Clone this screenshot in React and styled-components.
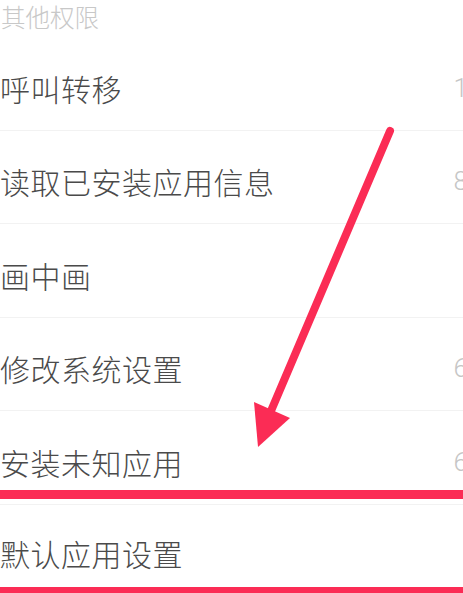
import React from "react";
import styled, { createGlobalStyle } from "styled-components";

const GlobalStyle = createGlobalStyle`
  html, body {
    margin: 0;
    padding: 0;
    background: #ffffff;
  }
  body {
    font-family: "Noto Sans CJK SC", "Noto Sans", sans-serif;
    overflow: hidden;
  }
`;

const Page = styled.div`
  position: relative;
  width: 463px;
  height: 593px;
  overflow: hidden;
  background: #ffffff;
`;

const SectionTitle = styled.div`
  height: 37px;
  padding-left: 1px;
  font-size: 24.5px;
  line-height: 34px;
  color: #c8c8c8;
  font-weight: 300;
`;

const List = styled.div`
  display: flex;
  flex-direction: column;
`;

const Row = styled.div`
  display: flex;
  align-items: center;
  justify-content: space-between;
  height: 93.5px;
  box-sizing: border-box;
  padding-top: ${(props) => (props.last ? "4px" : "9px")};
  border-bottom: 1px solid ${(props) => (props.last ? "transparent" : "#f2f2f2")};
`;

const Label = styled.span`
  font-size: 30px;
  letter-spacing: 0.5px;
  color: #4a4a4a;
  font-weight: 300;
  white-space: nowrap;
`;

const Count = styled.span`
  font-family: "Roboto", "Noto Sans", sans-serif;
  font-size: 26px;
  font-weight: 300;
  color: #c6c6c6;
  margin-right: -5px;
`;

/* 标注：红框 */
const Highlight = styled.div`
  position: absolute;
  left: 0;
  right: 0;
  top: 490px;
  height: 106px;
  box-sizing: border-box;
  border-top: 9px solid #fb2c55;
  border-bottom: 9px solid #fb2c55;
  pointer-events: none;
`;

const ArrowLayer = styled.svg`
  position: absolute;
  left: 0;
  top: 0;
  pointer-events: none;
`;

const items = [
  { name: "呼叫转移", count: "1" },
  { name: "读取已安装应用信息", count: "8" },
  { name: "画中画", count: "" },
  { name: "修改系统设置", count: "6" },
  { name: "安装未知应用", count: "6" },
  { name: "默认应用设置", count: "" },
];

function App() {
  return (
    <>
      <GlobalStyle />
      <Page>
        <SectionTitle>其他权限</SectionTitle>
        <List>
          {items.map((item, i) => (
            <Row key={item.name} last={i === items.length - 1}>
              <Label>{item.name}</Label>
              <Count>{item.count}</Count>
            </Row>
          ))}
        </List>

        <Highlight />

        <ArrowLayer width="463" height="593" viewBox="0 0 463 593">
          <line
            x1="390"
            y1="131"
            x2="268"
            y2="418"
            stroke="#fb2c55"
            strokeWidth="8"
            strokeLinecap="round"
          />
          <polygon points="254,402 290,418 258,447" fill="#fb2c55" />
        </ArrowLayer>
      </Page>
    </>
  );
}

export default App;
